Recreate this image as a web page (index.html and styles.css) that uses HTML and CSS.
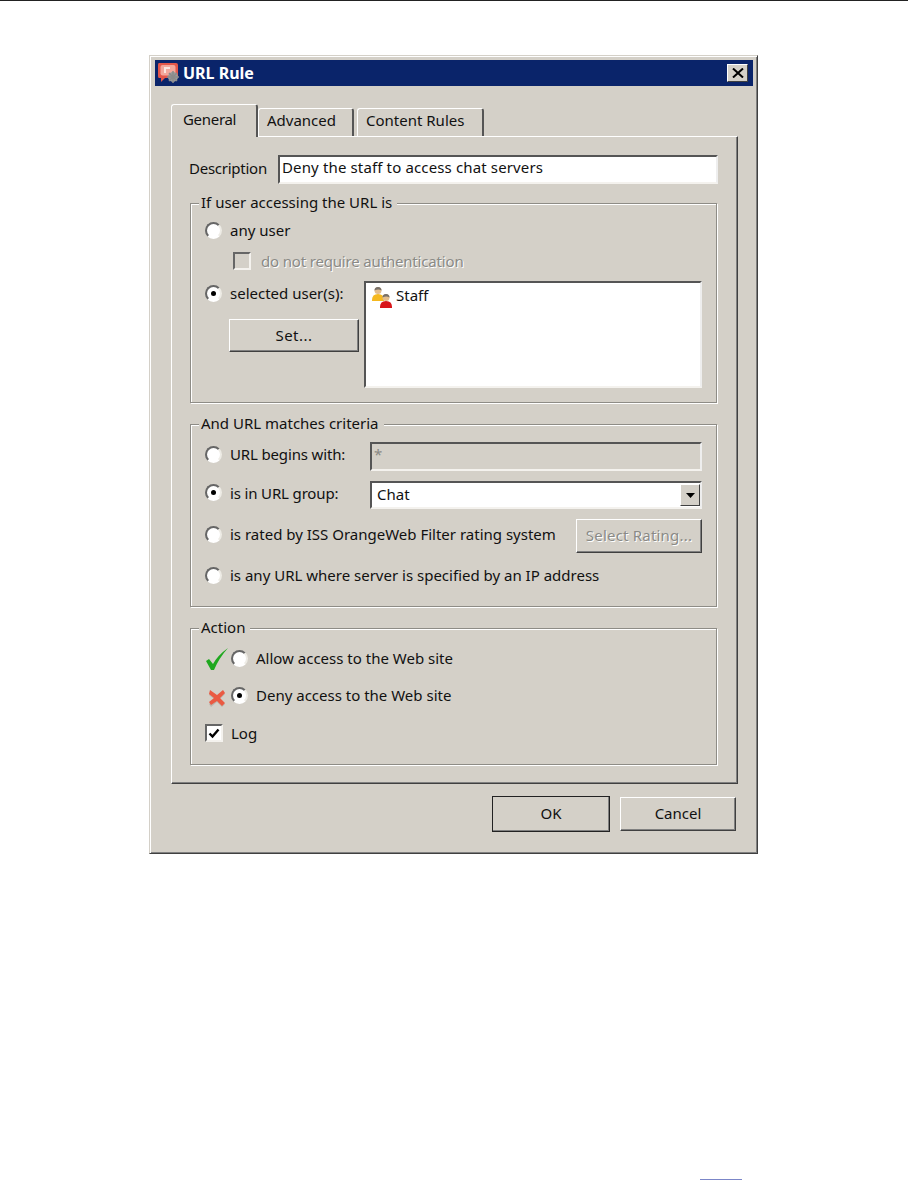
FILE: index.html
```html
<!DOCTYPE html>
<html lang="en">
<head>
    <meta charset="UTF-8">
    <title>URL Rule</title>
    <link rel="stylesheet" href="styles.css">
</head>
<body>
    <div class="page-rule"></div>

    <div class="dialog">
        <div class="titlebar">
            <svg class="app-icon" width="23" height="22" viewBox="0 0 23 22">
                <path d="M2 1h17q2 0 2 2v11q0 2-2 2H8l-4 4v-4H2q-1 0-1-2V3q0-2 1-2z" fill="#e4574a"/>
                <rect x="3.500" y="3" width="15" height="10.500" rx="2" fill="#f3a89c"/>
                <path d="M7 5h6v2H9v4H7z" fill="#fbe6e0"/>
                <circle cx="16" cy="15" r="5" fill="#9a9a9a"/>
                <circle cx="16" cy="15" r="2" fill="#e6e6e6"/>
                <path d="M16 9v12M10 15h12M12 11l8 8M20 11l-8 8" stroke="#8a8a8a" stroke-width="1.500"/>
            </svg>
            <span class="title">URL Rule</span>
            <button class="close">
                <svg width="12" height="10" viewBox="0 0 12 10"><path d="M1 0.500l10 9M11 0.500l-10 9" stroke="#000" stroke-width="2"/></svg>
            </button>
        </div>

        <div class="tabs">
            <div class="tab active">General</div>
            <div class="tab advanced">Advanced</div>
            <div class="tab content-rules">Content Rules</div>
        </div>

        <div class="panel">
            <div class="desc-row">
                <label class="desc-label">Description</label>
                <div class="field desc-field">Deny the staff to access chat servers</div>
            </div>

            <div class="group group-user">
                <div class="legend">If user accessing the URL is</div>
                <div class="row row-any"><span class="radio"></span><span>any user</span></div>
                <div class="row row-auth"><span class="check"></span><span class="disabled">do not require authentication</span></div>
                <div class="users">
                    <div class="users-left">
                        <div class="row"><span class="radio on"></span><span>selected user(s):</span></div>
                        <button class="btn set-btn">Set...</button>
                    </div>
                    <div class="listbox">
                        <svg width="24" height="24" viewBox="0 0 24 24">
                            <path d="M1 15q0-6 6-6t6 6v1H1z" fill="#f5b81f"/>
                            <circle cx="7" cy="5.500" r="3.500" fill="#e3bd8c"/>
                            <path d="M3.500 5.500a3.500 3.500 0 0 1 7 0q-3-2-7 0z" fill="#77706a"/>
                            <path d="M9 22q0-6 6-6t6 6v1H9z" fill="#d8161a"/>
                            <circle cx="15" cy="12.500" r="3.500" fill="#e3bd8c"/>
                            <path d="M11.500 12.500a3.500 3.500 0 0 1 7 0q-3-2-7 0z" fill="#77706a"/>
                        </svg>
                        <span>Staff</span>
                    </div>
                </div>
            </div>

            <div class="group group-url">
                <div class="legend">And URL matches criteria</div>
                <div class="row row-begins">
                    <span class="radio"></span><span class="url-label">URL begins with:</span>
                    <div class="field readonly">*</div>
                </div>
                <div class="row row-urlgroup">
                    <span class="radio on"></span><span class="url-label">is in URL group:</span>
                    <div class="field combo">
                        <span class="combo-text">Chat</span>
                        <span class="arrow-btn"><svg width="9" height="5" viewBox="0 0 9 5"><path d="M0 0h9L4.500 5z" fill="#000"/></svg></span>
                    </div>
                </div>
                <div class="row row-rated">
                    <span class="radio"></span><span class="rated-label">is rated by ISS OrangeWeb Filter rating system</span>
                    <button class="btn rating-btn">Select Rating...</button>
                </div>
                <div class="row row-ip"><span class="radio"></span><span>is any URL where server is specified by an IP address</span></div>
            </div>

            <div class="group group-action">
                <div class="legend">Action</div>
                <div class="row action-row row-allow">
                    <svg class="action-icon" width="24" height="24" viewBox="0 0 24 24"><path d="M1 14l3-2 4 5Q13 8 23 1 14 11 9 23H6z" fill="#1fa81f"/></svg>
                    <span class="radio"></span><span>Allow access to the Web site</span>
                </div>
                <div class="row action-row row-deny">
                    <svg class="action-icon deny-icon" width="20" height="20" viewBox="0 0 20 20">
                        <path d="M3 4l7 4 6-5 2 3-5 5 5 5-3 3-5-5-6 5-2-3 5-5-5-4z" fill="#bbb6ae"/>
                        <path d="M3 2l7 5 6-5 2 3-5 5 5 5-3 3-5-5-6 4-2-3 5-4-5-4z" fill="#ea5a42"/>
                    </svg>
                    <span class="radio on"></span><span>Deny access to the Web site</span>
                </div>
                <div class="row row-log">
                    <span class="check checked"><svg width="12" height="11" viewBox="0 0 12 11"><path d="M1.500 5.500l3 3 6-7" fill="none" stroke="#000" stroke-width="2.400"/></svg></span>
                    <span>Log</span>
                </div>
            </div>
        </div>

        <div class="actions">
            <button class="btn ok-btn">OK</button>
            <button class="btn cancel-btn">Cancel</button>
        </div>
    </div>

    <div class="page-foot"></div>
</body>
</html>
```

FILE: styles.css
```css
* {
    box-sizing: border-box;
}
html, body {
    margin: 0;
    padding: 0;
}
body {
    width: 908px;
    height: 1180px;
    overflow: hidden;
    display: flex;
    flex-direction: column;
    background: white;
    color: #111;
    font-family: "Noto Sans", sans-serif;
    font-size: 15px;
    line-height: 18px;
}
.page-rule {
    height: 1px;
    background: #222;
}
.page-foot {
    width: 42px;
    height: 1px;
    margin: auto 0 0 700px;
    background: #7b86c8;
}
.dialog {
    width: 609px;
    height: 799px;
    margin: 54px 0 0 149px;
    padding: 4px 4px 4px 5px;
    background: #d4d0c8;
    border: 1px solid;
    border-color: #d4d0c8 #404040 #404040 #d4d0c8;
    box-shadow: inset 1px 1px 0 white, inset -1px -1px 0 #808080;
}
.titlebar {
    display: flex;
    align-items: center;
    height: 26px;
    padding: 0 5px 0 2px;
    background: #0a246a;
    color: white;
}
.app-icon {
    flex: none;
    margin-right: 3px;
}
.title {
    font-size: 16px;
    font-weight: 700;
}
.close {
    display: flex;
    align-items: center;
    justify-content: center;
    width: 21px;
    height: 18px;
    margin-left: auto;
    padding: 0;
    background: #d4d0c8;
    border: 1px solid;
    border-color: white #404040 #404040 white;
}
.tabs {
    display: flex;
    align-items: flex-end;
    height: 50px;
    padding-left: 16px;
}
.tab {
    height: 28px;
    padding: 2px 0 0 8px;
    background: #d4d0c8;
    border: 1px solid;
    border-color: white #555 transparent white;
    border-bottom: 0;
    border-radius: 3px 3px 0 0;
}
.tab.active {
    position: relative;
    z-index: 1;
    width: 87px;
    height: 33px;
    margin-bottom: -1px;
    padding: 5px 0 0 11px;
    border-right-width: 2px;
    letter-spacing: -0.3px;
}
.tab.advanced {
    width: 96px;
    border-right-width: 2px;
}
.tab.content-rules {
    width: 127px;
    margin-left: 3px;
    border-right-width: 2px;
}
.panel {
    width: 567px;
    height: 648px;
    margin-left: 16px;
    padding: 18px 19px 0 18px;
    border: 1px solid;
    border-color: white #404040 #404040 white;
    box-shadow: inset -1px -1px 0 #808080;
}
.desc-row {
    display: flex;
    align-items: center;
    height: 29px;
}
.desc-label {
    width: 88px;
    margin-left: -1px;
    margin-right: 1px;
    padding-bottom: 3px;
    letter-spacing: -0.25px;
}
.field {
    height: 100%;
    background: white;
    border: 2px solid;
    border-color: #555 #eee #f4f2ee #555;
    padding-left: 2px;
    line-height: 20px;
}
.desc-field {
    width: 440px;
    letter-spacing: 0.14px;
}
.group {
    position: relative;
    width: 527px;
    border: 1px solid #8e8c86;
    box-shadow: 1px 1px 0 white, inset 1px 1px 0 white;
    padding: 0 14px;
}
.legend {
    position: absolute;
    top: -11px;
    left: 8px;
    padding: 0 5px 0 2px;
    background: #d4d0c8;
}
.group-user {
    height: 200px;
    margin-top: 19px;
}
.group-url {
    height: 183px;
    margin-top: 21px;
}
.group-action {
    height: 137px;
    margin-top: 21px;
}
.row {
    display: flex;
    align-items: center;
    height: 18px;
}
.radio {
    flex: none;
    position: relative;
    width: 17px;
    height: 17px;
    margin-right: 8px;
    background: white;
    border-radius: 50%;
    border: 2px solid;
    border-color: #666 #eeece6 #fff #666;
}
.radio.on::after {
    content: "";
    position: absolute;
    top: 4px;
    left: 4px;
    width: 5px;
    height: 5px;
    background: black;
    border-radius: 50%;
}
.check {
    flex: none;
    display: flex;
    align-items: center;
    justify-content: center;
    width: 18px;
    height: 18px;
    margin-right: 8px;
    background: #d4d0c8;
    border: 2px solid;
    border-color: #666 #f4f2ee #f4f2ee #666;
}
.check.checked {
    background: white;
}
.disabled {
    color: #8a8a86;
    text-shadow: 1px 1px 0 white;
    letter-spacing: -0.17px;
}
.row-any {
    margin-top: 17px;
}
.row-auth {
    margin: 13px 0 0 28px;
}
.row-auth .check {
    margin-right: 10px;
}
.users {
    display: flex;
    margin-top: 11px;
}
.users-left {
    width: 159px;
    padding-top: 3px;
}
.btn {
    display: block;
    padding: 0 0 2px;
    background: #d4d0c8;
    color: #111;
    font: inherit;
    border: 1px solid;
    border-color: white #404040 #404040 white;
    box-shadow: inset -1px -1px 0 #808080;
}
.set-btn {
    width: 130px;
    height: 33px;
    margin: 17px 0 0 24px;
    letter-spacing: 0.5px;
}
.listbox {
    display: flex;
    align-items: flex-start;
    width: 338px;
    height: 107px;
    padding: 2px 0 0 5px;
    background: white;
    border: 2px solid;
    border-color: #555 #eee #f4f2ee #555;
}
.listbox svg {
    flex: none;
}
.listbox span {
    margin: 1px 0 0 1px;
}
.url-label {
    width: 140px;
    letter-spacing: -0.15px;
}
.row-begins {
    height: 29px;
    margin-top: 17px;
}
.row-begins .radio,
.row-begins .url-label {
    margin-bottom: 5px;
}
.row-urlgroup {
    height: 28px;
    margin-top: 10px;
}
.row-urlgroup .radio,
.row-urlgroup .url-label {
    margin-bottom: 5px;
}
.row-rated {
    height: 34px;
    margin-top: 10px;
}
.row-rated .radio,
.rated-label {
    margin-bottom: 4px;
}
.row-ip {
    margin-top: 13px;
}
.readonly {
    width: 332px;
    background: #d4d0c8;
    color: #8a8a86;
}
.combo {
    display: flex;
    align-items: center;
    justify-content: space-between;
    width: 332px;
    padding-left: 5px;
}
.combo-text {
    padding-bottom: 3px;
}
.arrow-btn {
    display: flex;
    align-items: center;
    justify-content: center;
    width: 20px;
    height: 22px;
    background: #d4d0c8;
    border: 1px solid;
    border-color: white #404040 #404040 white;
}
.rating-btn {
    width: 126px;
    height: 34px;
    margin-left: auto;
    color: #8a8a86;
    text-shadow: 1px 1px 0 white;
    letter-spacing: 0.2px;
}
.action-row {
    position: relative;
    padding-left: 26px;
}
.action-icon {
    position: absolute;
    left: 0;
    top: -2px;
}
.deny-icon {
    left: 2px;
    top: 2px;
}
.row-allow {
    margin-top: 20px;
}
.row-deny {
    margin-top: 19px;
}
.row-log {
    margin-top: 20px;
}
.actions {
    display: flex;
    align-items: center;
    gap: 10px;
    height: 48px;
    margin-top: 6px;
    padding-left: 337px;
}
.ok-btn {
    width: 118px;
    height: 36px;
    outline: 1px solid #222;
    outline-offset: -1px;
}
.cancel-btn {
    width: 116px;
    height: 34px;
}
```
